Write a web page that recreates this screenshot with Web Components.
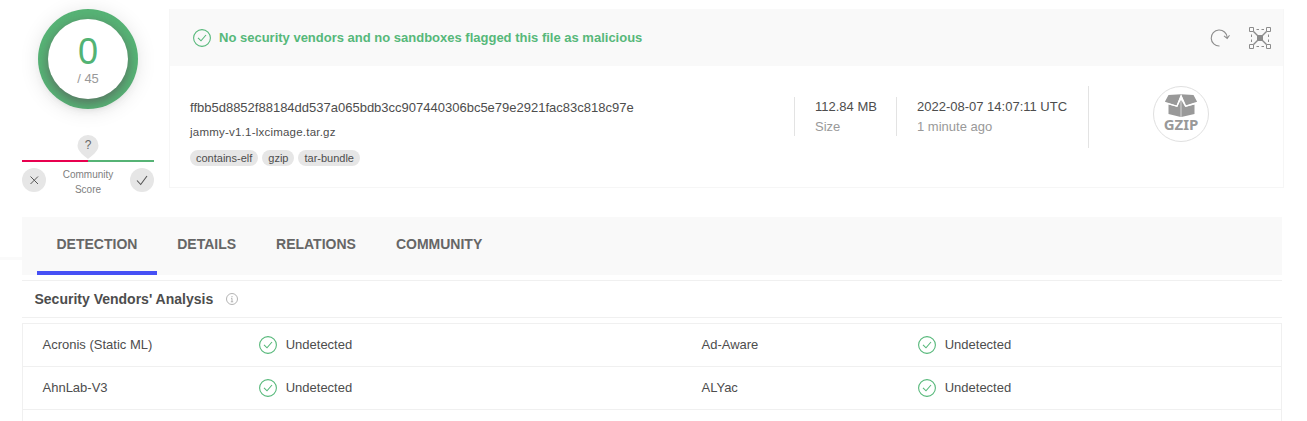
<!DOCTYPE html>
<html lang="en">
<head>
<meta charset="utf-8">
<title>File report</title>
<style>
html,body{margin:0;height:421px;overflow:hidden;background:#fff}
body{font:13px/20px "Liberation Sans",Arial,sans-serif;color:#4d4d4d}
</style>
</head>
<body>
<file-report></file-report>
<script>
const define = (name, html) => customElements.define(name, class extends HTMLElement {
  constructor() {
    super();
    const t = document.createElement('template');
    t.innerHTML = html;
    this.attachShadow({mode: 'open'}).append(t.content.cloneNode(true));
  }
});

define('check-icon', `<style>:host{display:block;width:18px;height:18px;flex:none;color:#56b87a}svg{display:block}</style>
<svg width="18" height="18" viewBox="0 0 18 18" fill="none" stroke="currentColor"><circle cx="9" cy="9" r="8.4" stroke-width="1.1"/><path d="M5 8.800l3 3L13 6" stroke-width="1.1"/></svg>`);

define('score-ring', `<style>
:host{display:flex;box-sizing:border-box;width:100px;height:100px;padding:10px;border-radius:50%;background:#56b375;box-shadow:0 2px 20px rgba(0,0,0,.1)}
div{width:80px;height:80px;border-radius:50%;background:#fff;display:flex;flex-direction:column;align-items:center;box-shadow:0 4px 12px rgba(90,90,90,.75)}
b{font-weight:400;font-size:36px;line-height:36px;color:#52b374;margin-top:15px}
span{font-size:13px;line-height:15px;color:#999;margin-top:1px}
</style><div><b><slot name="score"></slot></b><span><slot></slot></span></div>`);

define('community-score', `<style>
:host{display:flex;flex-direction:column;width:132px;align-items:center;color:#808080}
svg{display:block}
.bar{height:2px;width:132px;background:linear-gradient(90deg,#e8004f 50%,#56b375 50%);margin-top:1px}
.row{display:flex;width:132px;justify-content:space-between;margin-top:6px}
.btn{width:24px;height:24px;border-radius:50%;background:#e6e6e6}
.label{font-size:10px;line-height:15px;text-align:center;width:60px;margin-top:-1px}
.pin{display:grid}
.pin>*{grid-area:1/1}
.pin span{font-size:12px;line-height:20px;text-align:center;color:#666}
</style>
<div class="pin"><svg width="22" height="24" viewBox="0 0 22 24"><path d="M11 24C7.5 21 .5 16.5.5 10.5a10.5 10.5 0 0 1 21 0C21.500 16.500 14.500 21 11 24z" fill="#e6e6e6"/></svg><span>?</span></div>
<div class="bar"></div>
<div class="row"><div class="btn"><svg width="24" height="24" fill="none" stroke="#555"><path d="M8.500 8.500l7.500 7.500M16 8.500l-7.500 7.500"/></svg></div>
<div class="label"><slot></slot></div>
<div class="btn"><svg width="24" height="24" fill="none" stroke="#555" stroke-width="1.100"><path d="M7 12.500l3.700 4L17 8"/></svg></div></div>`);

define('tag-chip', `<style>:host{display:block;height:16px;border-radius:8px;background:#e6e6e6;padding:0 6px;font-size:11px;line-height:16px;color:#4d4d4d}</style><slot></slot>`);

define('file-meta', `<style>:host{display:block;box-sizing:border-box;border-left:1px solid #e3e3e3;padding-left:20px;height:39px;white-space:nowrap}
.sub{color:#999}</style><div><slot></slot></div><div class="sub"><slot name="sub"></slot></div>`);

define('gzip-badge', `<style>:host{display:block;box-sizing:border-box;width:56px;height:56px;border:1px solid #e0e0e0;border-radius:50%}
svg{display:block;margin:7px auto 0}
span{display:block;text-align:center;font:700 15px/17px "Noto Sans","Open Sans",sans-serif;color:#999;margin-top:-2px}</style>
<svg width="34" height="24" viewBox="0 0 34 24" fill="#999"><path d="M4.500 1L17 .2 12.500 11.500.9 7.800zM29.500 1L17 .2l4.500 11.300 11.600-3.700z"/><path d="M4.500 10.500l8.700 2.300L16.700 6v17L4.500 20zM30.500 10.500l-9.400 2.300L17.300 6v17L30.500 20z"/><path d="M4.500 9.700l8.500 2.600L17.200 2l4.600 10.300 9-2.600" fill="none" stroke="#fff" stroke-width="1.200"/></svg>
<span>GZIP</span>`);

define('file-card', `<style>
:host{display:block;box-sizing:border-box;width:1115px;height:179px;border:1px solid #f6f6f6;border-top:0}
header{height:57px;background:#f9f9f9;display:flex;align-items:center;padding:0 12px 0 23px;box-sizing:border-box}
h1{font-size:13px;line-height:20px;margin:0 0 0 8px;color:#56b87a;flex:1}
check-icon{margin-top:1px}
header svg{display:block}
.re{margin-right:19px}
.body{display:flex;padding-left:20px}
.id{width:604px;padding-top:32px}
.name{font-size:11.500px;letter-spacing:.22px;line-height:16px;margin-top:6px}
.tags{display:flex;gap:4px;margin-top:10px}
.size{margin-top:31px;width:102px}.date{margin-top:31px;width:192px}
.badge{border-left:1px solid #e3e3e3;height:62px;margin-top:20px;padding-left:64px}
</style>
<header><check-icon></check-icon><h1>No security vendors and no sandboxes flagged this file as malicious</h1>
<svg class="re" width="20" height="20" viewBox="0 0 20 20" fill="none" stroke="#8c8c8c" stroke-width="1.100"><path d="M9.500 18A8 8 0 1 1 17.200 9.500M14 7.800l3.200 2.700L19.500 7.300"/></svg>
<svg width="22" height="22" viewBox="0 0 22 22" fill="none" stroke="#8c8c8c"><path d="M.5.500h4v4h-4zM17.500.500h4v4h-4zM.5 17.500h4v4h-4zM17.500 17.500h4v4h-4z"/><path d="M4.500 4.500l4 4M17.500 4.500l-4 4M4.500 17.500l4-4M17.500 17.500l-4-4" stroke-width="1.400"/><path d="M7.500 2.500h2.500M12.500 2.500H15M7.500 19.500h2.500M12.500 19.500H15M2.500 7.500V10M2.500 12.500V15M19.500 7.500V10M19.500 12.500V15"/><path d="M8 8h6v6H8z" fill="#8c8c8c" stroke="none"/></svg></header>
<div class="body"><div class="id"><div class="hash">ffbb5d8852f88184dd537a065bdb3cc907440306bc5e79e2921fac83c818c97e</div><div class="name">jammy-v1.1-lxcimage.tar.gz</div><div class="tags"><tag-chip>contains-elf</tag-chip><tag-chip>gzip</tag-chip><tag-chip>tar-bundle</tag-chip></div></div>
<file-meta class="size">112.84 MB<span slot="sub">Size</span></file-meta><file-meta class="date">2022-08-07 14:07:11 UTC<span slot="sub">1 minute ago</span></file-meta><div class="badge"><gzip-badge></gzip-badge></div></div>`);

define('report-tab', `<style>:host{display:block;box-sizing:border-box;height:58px;padding:17px 20px 0;border-bottom:4px solid transparent;font-weight:700;font-size:14px;line-height:20px;color:#666}
:host([active]){border-color:#4650f5;padding:17px 19.800px 0 19.500px}</style><slot></slot>`);

define('vendor-result', `<style>:host{display:flex;height:42px;align-items:center;width:659px;flex:none}
.n{width:217px;padding-left:.5px;box-sizing:border-box}check-icon{margin:0 8.700px 0 0}</style><div class="n"><slot></slot></div><check-icon></check-icon><div>Undetected</div>`);

define('file-report', `<style>
:host{display:block;width:1307px}
.top{display:flex;padding:9px 0 0 22px;height:217px;box-sizing:border-box}
.score{width:147px;flex:none}
score-ring{margin-left:16px}
community-score{margin-top:26px}
.tabline{display:grid;grid-template-columns:22px 1260px}
.tabline i{height:3px;background:#fafafa;margin-top:40px}
nav{display:flex;background:#f9f9f9;padding-left:15px;height:58px}
main{width:1260px;margin-left:22px}
h2{box-sizing:border-box;height:38px;margin:5px 0;border:1px solid #f0f0f0;border-width:1px 0;font-size:14px;line-height:37px;padding-left:12.500px;display:flex;align-items:center;gap:12.500px}
.table{border:1px solid #f0f0f0;border-bottom:0;height:110px;overflow:hidden}
.row{display:flex;padding-left:19px;border-bottom:1px solid #f0f0f0;overflow:hidden}
</style>
<div class="top"><div class="score"><score-ring><span slot="score">0</span>/ 45</score-ring><community-score>Community Score</community-score></div><file-card></file-card></div>
<div class="tabline"><i></i><nav><report-tab active>DETECTION</report-tab><report-tab>DETAILS</report-tab><report-tab>RELATIONS</report-tab><report-tab>COMMUNITY</report-tab></nav></div>
<main><h2>Security Vendors' Analysis<svg width="12" height="12" viewBox="0 0 12 12" fill="none" stroke="#aaa" stroke-width=".9"><circle cx="6" cy="6" r="5.500"/><path d="M6 3v1.200M5 5.300h1v3.500M4.800 8.800h2.400"/></svg></h2>
<div class="table"><div class="row"><vendor-result>Acronis (Static ML)</vendor-result><vendor-result>Ad-Aware</vendor-result></div><div class="row"><vendor-result>AhnLab-V3</vendor-result><vendor-result>ALYac</vendor-result></div></div></main>`);
</script>
</body>
</html>
